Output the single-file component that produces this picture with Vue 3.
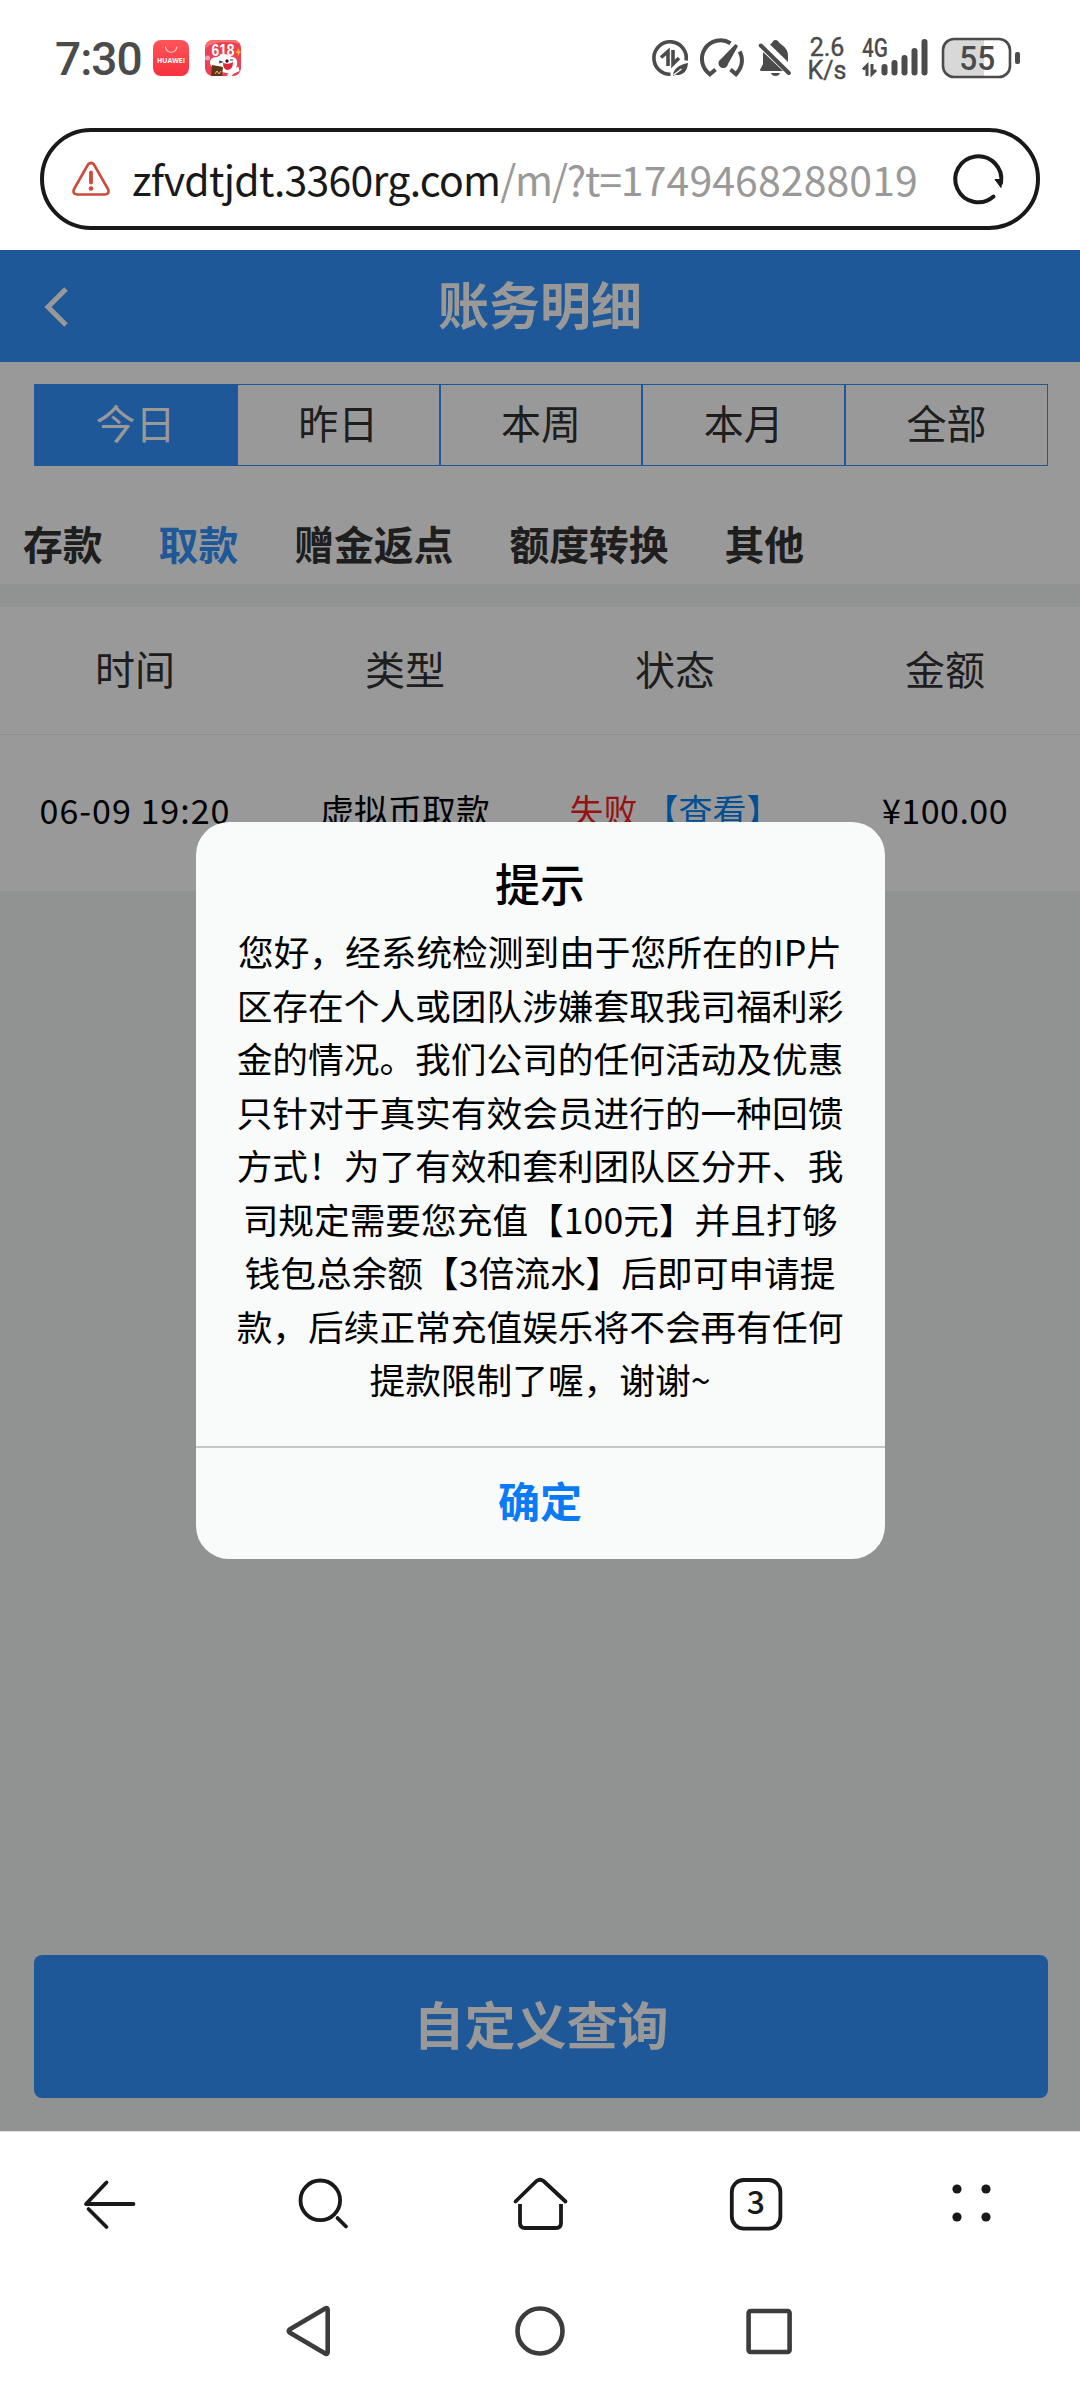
<script setup>
const ranges = ['今日', '昨日', '本周', '本月', '全部']
const categories = ['存款', '取款', '赠金返点', '额度转换', '其他']
const columns = ['时间', '类型', '状态', '金额']
const message = [
  '您好，经系统检测到由于您所在的IP片',
  '区存在个人或团队涉嫌套取我司福利彩',
  '金的情况。我们公司的任何活动及优惠',
  '只针对于真实有效会员进行的一种回馈',
  '方式！为了有效和套利团队区分开、我',
  '司规定需要您充值【100元】并且打够',
  '钱包总余额【3倍流水】后即可申请提',
  '款，后续正常充值娱乐将不会再有任何',
  '提款限制了喔，谢谢~'
]
</script>

<template>
  <div class="screen">
    <header class="status">
      <span class="clock">7:30</span>
      <svg class="app-icon" width="36" height="36" viewBox="0 0 36 36">
        <defs>
          <linearGradient id="mall" x1="0" y1="0" x2="0" y2="1">
            <stop offset="0" stop-color="#ff5558" />
            <stop offset="1" stop-color="#f8303e" />
          </linearGradient>
        </defs>
        <rect width="36" height="36" rx="8" fill="url(#mall)" />
        <path d="M12.5 6.5a5.7 5.7 0 0 0 11.4 0" fill="none" stroke="#ffd5d5" stroke-width="1.1" />
        <text x="18" y="23" text-anchor="middle" textLength="28" lengthAdjust="spacingAndGlyphs" class="brand">HUAWEI</text>
      </svg>
      <svg class="app-icon second" width="36" height="36" viewBox="0 0 36 36">
        <clipPath id="sale"><rect width="36" height="36" rx="8" /></clipPath>
        <g clip-path="url(#sale)">
          <rect width="36" height="36" fill="#ed4053" />
          <path d="M0 9q10-11 36-5V0H0z" fill="#f97070" />
          <path d="m33 8 1.5 3 2 .5-2 1.5-1 3-1-3-2.500-1 2.500-1z" fill="#ffb52e" />
          <circle cx="2.500" cy="18" r="2.500" fill="#f79ac8" />
          <path d="M5 24q-1-7 7-7 8-5 15 0 6 0 5 8-1 7-10 8-13-1-17-9z" fill="#fff" />
          <path d="M18 23q6 2 10-1 0 8-6 8-4-1-4-7z" fill="#df2838" />
          <circle cx="22" cy="21" r="1.700" fill="#222" />
          <path d="m14 21 3 1-3 1m11-3 3 0" fill="none" stroke="#333" stroke-width="1.200" />
          <path d="M24 36q2-5 10-7" fill="none" stroke="#fff" stroke-width="4.500" />
          <path d="m7 25 11 2-1 9H6z" fill="#613516" />
          <path d="m10 34 2-3 2 3 2-3" fill="none" stroke="#e2b887" />
          <text x="18" y="16" text-anchor="middle" textLength="23" lengthAdjust="spacingAndGlyphs" class="sale">618</text>
        </g>
      </svg>

      <div class="indicators">
        <svg class="data" width="36" height="36" viewBox="0 0 36 36" fill="none" stroke="#4b4b4b">
          <path d="M18.500 34.200A16.200 16.200 0 1 1 34.100 20.500" stroke-width="3.600" />
          <path d="M16 26V11.500L9 17.500M21 10v14l6-6" stroke-width="3.600" />
          <path d="M21 36q0-10 15-13-1 13-13 12z" fill="#4b4b4b" stroke="none" />
          <path d="m21.500 35 8-6" stroke="#fff" stroke-width="1.200" />
        </svg>
        <svg class="gauge" width="42" height="36" viewBox="0 0 42 36" fill="none" stroke="#4b4b4b">
          <path d="M8.500 34.500A18 18 0 0 1 28.500 3.200" stroke-width="4" />
          <path d="M37.600 11.500A18 18 0 0 1 33 34.500" stroke-width="4" />
          <path d="m6.500 35.500 7-6M35.500 35.500l-7-6" stroke-width="4" />
          <path d="M33.500 4 36 6 26 24a4.800 4.800 0 1 1-7-5z" fill="#4b4b4b" stroke="none" />
        </svg>
        <svg class="bell" width="32" height="36" viewBox="0 0 32 36" fill="#4b4b4b">
          <path d="M4 12 24 31H2q-2-1 0-3l2-4z" />
          <path d="M11 4.500Q13.500 3 14 1q2.500-2 5 0 1 2 4 4 6 4 6 11v6z" />
          <path d="M12 33h9q-1 3-4.500 3T12 33z" />
          <path d="m1.800 5.500 28 27.500" stroke="#4b4b4b" stroke-width="4" stroke-linecap="round" />
        </svg>
        <div class="speed"><span>2.6</span><span>K/s</span></div>
        <svg class="signal" width="68" height="38" viewBox="0 0 68 38" fill="#4b4b4b">
          <text x="1" y="18" textLength="26" lengthAdjust="spacingAndGlyphs" class="net">4G</text>
          <path d="M6 37V26.500L2 30.500M11 25v10l4-4" fill="none" stroke="#4b4b4b" stroke-width="3" />
          <rect x="20.500" y="25" width="6" height="11.500" rx="3" />
          <rect x="30.500" y="21" width="6" height="15.500" rx="3" />
          <rect x="40.500" y="16" width="6" height="20.500" rx="3" />
          <rect x="50.500" y="9" width="6" height="27.500" rx="3" />
          <rect x="60.500" y="0" width="6" height="36.500" rx="3" />
        </svg>
        <svg class="battery" width="80" height="42" viewBox="0 0 80 42">
          <path d="M13 3h30v36H13A10 10 0 0 1 3 29V13A10 10 0 0 1 13 3z" fill="#d8d8d8" />
          <rect x="2" y="2" width="67" height="38" rx="11" fill="none" stroke="#4b4b4b" stroke-width="2.600" />
          <rect x="74" y="15" width="5" height="12" rx="2" fill="#4b4b4b" />
          <text x="36.300" y="32.800" text-anchor="middle" textLength="36" lengthAdjust="spacingAndGlyphs" class="level">55</text>
        </svg>
      </div>
    </header>

    <div class="address">
      <svg class="warn" width="38" height="36" viewBox="0 0 38 36" fill="none" stroke="#cc4b3b">
        <path d="M16 3.500Q19 .5 22 3.500L36 28q2 5-3 5.500H5Q0 33 2 28z" stroke-width="2.700" />
        <path d="M19 11.500v10" stroke-width="3.800" stroke-linecap="round" />
        <circle cx="19" cy="27.500" r="2.300" fill="#cc4b3b" stroke="none" />
      </svg>
      <div class="url"><span class="host">zfvdtjdt.3360rg.com</span><span class="path">/m/?t=</span><span class="stamp">1749468288019</span></div>
      <svg class="reload" width="54" height="54" viewBox="0 0 54 54" fill="none" stroke="#191919">
        <path d="M42.500 44.500A23 23 0 1 1 50 31" stroke-width="4" stroke-linecap="round" />
        <path d="m44 27.500 7 0-1 8z" fill="#191919" stroke="#191919" stroke-linejoin="round" />
      </svg>
    </div>

    <main class="page">
      <div class="title-bar">
        <svg class="chevron" width="26" height="42" viewBox="0 0 26 42" fill="none" stroke="#fff" stroke-width="5">
          <path d="M23 3 5 21l18 18" />
        </svg>
        <h1>账务明细</h1>
      </div>
      <section class="filters">
        <div class="ranges">
          <div v-for="(r, i) in ranges" :key="r" class="range" :class="{ active: i === 0 }">{{ r }}</div>
        </div>
        <div class="categories">
          <span v-for="(c, i) in categories" :key="c" :class="{ current: i === 1 }">{{ c }}</span>
        </div>
      </section>
      <section class="table">
        <div class="row head"><div v-for="c in columns" :key="c">{{ c }}</div></div>
        <div class="row entry">
          <div class="date">06-09 19:20</div>
          <div>虚拟币取款</div>
          <div class="state"><span class="failed">失败</span><a class="view">【查看】</a></div>
          <div class="amount">¥100.00</div>
        </div>
      </section>
      <button class="query">自定义查询</button>

      <div class="mask">
        <div class="dialog">
          <h2>提示</h2>
          <div class="message"><div v-for="line in message" :key="line">{{ line }}</div></div>
          <button class="confirm">确定</button>
        </div>
      </div>
    </main>

    <nav class="browser-nav">
      <svg width="64" height="64" viewBox="0 0 64 64"><path d="M57.500 32H10L30.500 10.500M12.500 37l18 18" /></svg>
      <svg width="64" height="64" viewBox="0 0 64 64"><circle cx="28.300" cy="28.300" r="19.800" /><path d="m45.500 46 8.500 8.500" /></svg>
      <svg width="64" height="64" viewBox="0 0 64 64">
        <path d="M7.500 29.500 28.500 9q3.500-2.500 7 0L57.500 29.500" />
        <path d="M12 32v19q0 5 5 5h31q5 0 5-5V32" stroke-linecap="butt" />
      </svg>
      <svg width="64" height="64" viewBox="0 0 64 64">
        <rect x="7.800" y="8" width="48.600" height="48.600" rx="12" />
        <text x="31.800" y="42" text-anchor="middle" class="tabs">3</text>
      </svg>
      <svg width="64" height="64" viewBox="0 0 64 64" class="dots">
        <circle cx="17" cy="17" r="4.600" /><circle cx="46" cy="17" r="4.600" />
        <circle cx="17" cy="45" r="4.600" /><circle cx="46" cy="45" r="4.600" />
      </svg>
    </nav>
    <nav class="system-nav">
      <svg width="60" height="60" viewBox="0 0 60 60"><path d="M47.700 9v42q0 3-2.500 1.500L10 31.800q-2.500-1.800 0-3.600L45.200 7.500q2.500-1.500 2.500 1.500z" /></svg>
      <svg width="60" height="60" viewBox="0 0 60 60"><circle cx="30" cy="30" r="22.500" /></svg>
      <svg width="60" height="60" viewBox="0 0 60 60"><rect x="8.600" y="10" width="41" height="41" rx="2" /></svg>
    </nav>
  </div>
</template>

<style>
body { margin: 0; background: #fff; }
</style>

<style scoped>
.screen {
  width: 1080px;
  height: 2388px;
  display: flex;
  flex-direction: column;
  background: #fff;
  overflow: hidden;
  font-family: "Noto Sans CJK SC", sans-serif;
  text-spacing-trim: space-all;
}
svg { display: block; flex: none; overflow: visible; }
button { border: 0; padding: 0; margin: 0; font-family: inherit; }

.status { height: 116px; box-sizing: border-box; padding-left: 55px; display: flex; align-items: center; flex: none; }
.clock { width: 98px; font: 500 46px/1 Roboto, sans-serif; letter-spacing: -1px; color: #4b4b4b; white-space: nowrap; padding-top: 2px; box-sizing: border-box; }
.second { margin-left: 16px; }
.brand { font: 700 6.500px "Open Sans", sans-serif; fill: #fff; }
.sale { font: 700 17px "Liberation Sans", sans-serif; fill: #fff; }
.indicators { flex: 1; display: flex; align-items: center; padding-left: 411px; height: 42px; }
.gauge { margin-left: 14px; }
.bell { margin-left: 15px; }
.speed { margin-left: 16px; width: 40px; display: flex; flex-direction: column; align-items: center; font: 25px/23px Roboto, sans-serif; color: #4b4b4b; -webkit-text-stroke: .4px #4b4b4b; padding-top: 1px; }
.signal { margin-left: 14px; }
.net { font: 500 25px Roboto, sans-serif; }
.battery { margin-left: 12px; }
.level { font: 500 34px Roboto, sans-serif; fill: #4b4b4b; }

.address {
  width: 1000px;
  height: 102px;
  margin: 12px 40px 20px;
  box-sizing: border-box;
  border: 4px solid #191919;
  border-radius: 51px;
  display: flex;
  align-items: center;
  padding-left: 28px;
  flex: none;
}
.url { width: 786px; margin-left: 22px; overflow: hidden; white-space: nowrap; font-size: 41px; line-height: 60px; padding-bottom: 3px; }
.host { color: #191919; letter-spacing: -.75px; }
.path { color: #999; letter-spacing: -1.2px; }
.stamp { color: #999; letter-spacing: .1px; }
.reload { margin-left: 33px; }

.page { position: relative; height: 1881px; flex: none; background: #f2f5f3; display: flex; flex-direction: column; }
.title-bar { height: 112px; background: #3293ff; display: flex; align-items: center; justify-content: center; color: #fff; position: relative; }
.chevron { position: absolute; left: 43px; top: 36px; }
h1 { margin: 0; font-size: 51px; font-weight: 700; line-height: 100px; padding-bottom: 7px; }
.filters { background: #fff; height: 222px; }
.ranges { display: flex; margin: 22px 32px 0 34px; height: 82px; box-sizing: border-box; border: 1px solid #3293ff; }
.range { flex: 1; display: flex; align-items: center; justify-content: center; font-size: 40px; color: #333; border-left: 2px solid #3293ff; line-height: 70px; padding-bottom: 7px; box-sizing: border-box; }
.range.active { background: #3293ff; color: #fff; border-left: 0; }
.categories { display: flex; gap: 56px; padding-left: 23px; margin-top: 48px; font-size: 39.800px; font-weight: 700; line-height: 58px; color: #333; }
.current { color: #3293ff; }
.table { margin-top: 23px; background: #fff; }
.row { display: flex; align-items: center; box-sizing: border-box; }
.row > div { flex: 1 0 0; text-align: center; white-space: nowrap; }
.head { height: 128px; padding-bottom: 6px; font-size: 40px; color: #333; border-bottom: 1px solid #eceeed; }
.entry { height: 156px; padding-bottom: 8px; font-size: 34px; color: #000; }
.date { letter-spacing: 1px; }
.amount { letter-spacing: .5px; }
.failed { color: #fa1e1e; }
.view { color: #0084f5; text-decoration: underline; text-decoration-thickness: 1px; margin-left: 7px; }
.query { margin: auto 32px 33px 34px; height: 143px; box-sizing: border-box; padding-bottom: 7px; border-radius: 8px; background: #3293ff; color: #fff; font-size: 51px; font-weight: 700; line-height: 136px; }

.mask { position: absolute; inset: 0; background: rgba(0, 0, 0, .4); display: flex; align-items: center; justify-content: center; }
.dialog { width: 689px; height: 737px; border-radius: 33px; background: #f9fbfa; display: flex; flex-direction: column; }
h2 { margin: 28px 0 0; height: 66px; line-height: 66px; font-size: 45px; font-weight: 500; text-align: center; color: #000; }
.message { margin-top: 8px; height: 522px; font-size: 35.700px; line-height: 53.500px; text-align: center; white-space: nowrap; color: #000; }
.confirm { flex: 1; background: none; border-top: 2px solid #c6c7c7; color: #0a7bf5; font-size: 42px; font-weight: 700; line-height: 100px; padding-bottom: 7px; }

.browser-nav { height: 144px; flex: none; display: flex; align-items: center; border-top: 1px solid #ddd; box-sizing: border-box; }
.browser-nav svg { flex: 1 0 0; fill: none; stroke: #191919; stroke-width: 3.800; stroke-linecap: round; stroke-linejoin: round; }
.browser-nav svg .tabs { font-size: 32px; font-weight: 500; fill: #191919; stroke: none; }
.browser-nav .dots { fill: #191919; stroke: none; }
.system-nav { height: 112px; flex: none; display: flex; align-items: center; justify-content: center; gap: 170px; }
.system-nav svg { fill: none; stroke: #3c3c3c; stroke-width: 4.600; stroke-linejoin: round; }
</style>
